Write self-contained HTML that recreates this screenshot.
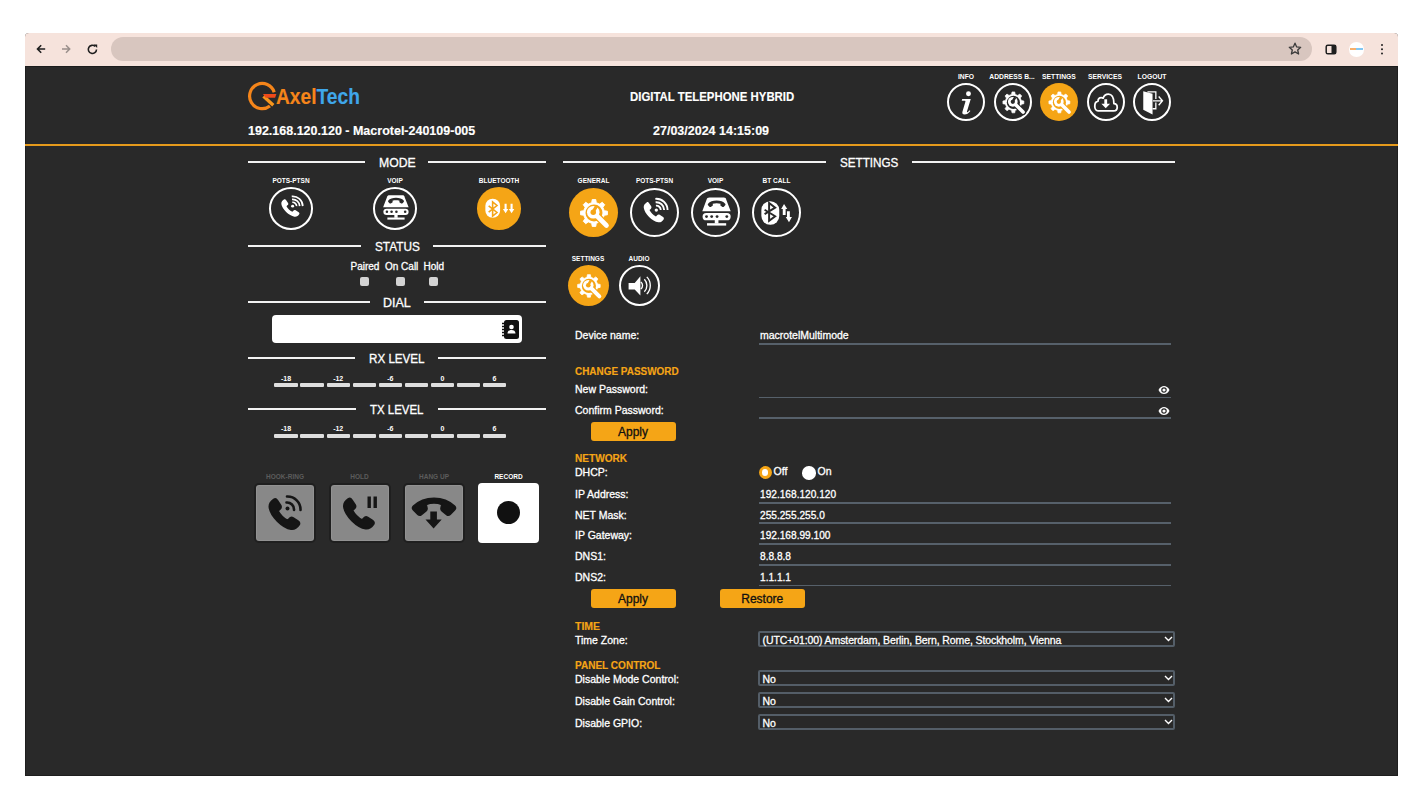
<!DOCTYPE html>
<html><head><meta charset="utf-8">
<style>
*{box-sizing:border-box;margin:0;padding:0}
html,body{width:1422px;height:800px;background:#fff;overflow:hidden;font-family:"Liberation Sans",sans-serif}
.a{position:absolute}
#win{position:absolute;left:25px;top:33px;width:1373px;height:743px;border-radius:4px 4px 0 0;overflow:hidden;background:#292929}
#tb{position:absolute;left:0;top:0;width:1373px;height:33px;background:#f6e3dc}
#omni{position:absolute;left:86px;top:4px;width:1201px;height:24px;border-radius:12px;background:#d8c6bf}
#page{position:absolute;left:0;top:33px;width:1373px;height:710px;background:#292929;border-left:1px solid #1e1e1e;border-right:1px solid #1e1e1e;border-bottom:1px solid #1e1e1e;border-top:1px solid #1b1c1c}
.t{position:absolute;white-space:nowrap;color:#fff;line-height:1;-webkit-text-stroke:0.3px currentColor}
.t.b{-webkit-text-stroke:0.15px currentColor}
.b{font-weight:bold}
.hr{position:absolute;height:2px;background:#f2f2f2}
.circ{position:absolute;border-radius:50%;border:2px solid #fff}
.circ.on{background:#f5a516;border:none}
.circ svg{position:absolute;left:-2px;top:-2px;width:calc(100% + 4px);height:calc(100% + 4px)}
.circ.on svg{left:0;top:0;width:100%;height:100%}
.lbl{position:absolute;white-space:nowrap;color:#fff;font-weight:bold;line-height:1;text-align:center;letter-spacing:-0.3px}
.orange{color:#f5a516}
.ul{position:absolute;height:1.6px;background:#56606a}
.sel{position:absolute;height:16px;border:2px solid #545e68;border-radius:2px}
.btn{position:absolute;background:#f5a516;border-radius:3px;color:#111;font-size:12px;text-align:center;line-height:20px;height:19px;-webkit-text-stroke:0.3px #111}
.bar{position:absolute;height:4px;background:#dedede;border-radius:1px}
.sq{position:absolute;width:9px;height:9px;background:#d3d3d3;border-radius:2px}
.pbtn{position:absolute;width:62px;height:60px;background:#888;border:2px solid #1f1f1f;border-radius:5px;box-shadow:inset 0 0 0 1px #929292}
</style></head><body>

<svg width="0" height="0" style="position:absolute">
<defs>
  <symbol id="hs" viewBox="0 0 24 24"><path d="M5.5 2.5C4 3.5 2.5 5 2.8 7.5 3.5 13 11 20.5 16.5 21.2c2.5.3 4-1.2 5-2.7.5-.8.3-1.7-.5-2.2l-3.2-2.1c-.8-.5-1.8-.3-2.4.4l-1.1 1.2c-2.8-1.5-4.6-3.3-6.1-6.1l1.2-1.1c.7-.6.9-1.6.4-2.4L7.7 3c-.5-.8-1.4-1-2.2-.5z"/></symbol>
  <symbol id="hang" viewBox="0 0 24 24"><path d="M12 7.5C7.5 7.5 3.8 9.2 1.3 11.6c-.5.5-.5 1.4 0 1.9l2.3 2.3c.5.5 1.3.5 1.8.1l2.4-1.9c.4-.3.6-.9.5-1.4l-.4-2c2.6-.9 5.6-.9 8.2 0l-.4 2c-.1.5.1 1.1.5 1.4l2.4 1.9c.5.4 1.3.4 1.8-.1l2.3-2.3c.5-.5.5-1.4 0-1.9C20.2 9.2 16.5 7.5 12 7.5z"/></symbol>
  <symbol id="gear" viewBox="0 0 100 100">
    <path fill="#fff" stroke="#fff" stroke-width="1.8" stroke-linejoin="round" d="M46.20 30.00 L47.40 23.50 L54.60 23.50 L55.80 30.00 L62.46 32.76 L67.90 29.01 L72.99 34.10 L69.24 39.54 L72.00 46.20 L78.50 47.40 L78.50 54.60 L72.00 55.80 L69.24 62.46 L72.99 67.90 L67.90 72.99 L62.46 69.24 L55.80 72.00 L54.60 78.50 L47.40 78.50 L46.20 72.00 L39.54 69.24 L34.10 72.99 L29.01 67.90 L32.76 62.46 L30.00 55.80 L23.50 54.60 L23.50 47.40 L30.00 46.20 L32.76 39.54 L29.01 34.10 L34.10 29.01 L39.54 32.76Z"/>
    <circle cx="51" cy="51" r="17.3" fill="var(--bg)"/>
    <g stroke-linecap="round">
      <path d="M60 60L77 77" stroke="var(--bg)" stroke-width="15"/>
      <path d="M50 50L76.5 76.5" stroke="#fff" stroke-width="9.5"/>
      <circle cx="49.5" cy="49.5" r="12.8" fill="#fff"/>
      <circle cx="49.5" cy="49.5" r="5.6" fill="var(--bg)"/>
      <path d="M49 49L56 37.5" stroke="var(--bg)" stroke-width="6.5" stroke-linecap="butt"/>
    </g>
  </symbol>
  <symbol id="info" viewBox="0 0 100 100">
    <circle cx="56.5" cy="28.5" r="6.5" fill="#fff"/>
    <path fill="#fff" d="M40 42h22.5l-10 33c-.6 2 .8 2.6 2.4 1.2l5-4.4 1.6 1.6c-5 6-9.5 9.5-15.5 9.5-4.6 0-6.6-3-5.4-7.4l7.8-26c.5-1.8-.3-2.5-2-2.5h-7.6z"/>
  </symbol>
  <symbol id="cloud" viewBox="0 0 100 100">
    <path fill="none" stroke="#fff" stroke-width="4.7" stroke-linejoin="round" d="M29 73.3H70C75.5 73.3 79.5 69 79.5 63.5 79.5 58 75.5 54 70.8 54 70.8 36 64 29 56.5 29 49 29 44 34 42.5 40 41 39 39.5 38.5 37.5 38.5 32.5 38.5 29 42.5 29 48 24 49 20.5 54 20.5 61 20.5 67.5 24 73.3 29 73.3Z"/>
    <path fill="#fff" d="M45.6 42.8h7.4v11.5h7.8l-11.5 12.2-11.5-12.2h7.8z"/>
  </symbol>
  <symbol id="logout" viewBox="0 0 100 100">
    <path fill="#fff" d="M27 21.9l24.4 6.7v54.1l-24.4-12.2z"/>
    <path fill="none" stroke="#fff" stroke-width="3.4" d="M38 23.2h22.1v19M60.1 51v16.8h-8.7"/>
    <path fill="none" stroke="#fff" stroke-width="3.6" d="M52.7 46.9h23M67.6 35.4l10 11.5-10 11.5"/>
  </symbol>
  <symbol id="phonewave" viewBox="0 0 100 100">
    <use href="#hs" x="22" y="24" width="52" height="52" fill="#fff"/>
    <circle cx="53.7" cy="45" r="3.4" fill="#fff"/>
    <path fill="none" stroke="#fff" stroke-width="3.8" d="M52.9 36A9 9 0 0 1 62.7 45M52.3 29.1A16 16 0 0 1 69.7 45M51.7 22.1A23 23 0 0 1 76.7 45"/>
  </symbol>
  <symbol id="voip" viewBox="0 0 100 100">
    <path fill="#fff" d="M37.5 19.4h29.5c3 0 4.6 1.5 5 4.5l9 23.8h-58l8.7-23.8c.8-3 2.5-4.5 5.8-4.5z"/>
    <path fill="#292929" d="M52.3 25.5c-7.5 0-14 2.5-17.5 6.5-.9 1-.9 2 0 3l2.8 3.2c.8.9 1.8 1 2.8.4l3.5-2.2c.6-.4.9-1 .8-1.7l-.4-2.6c5-1.5 11-1.5 16 0l-.4 2.6c-.1.7.2 1.3.8 1.7l3.5 2.2c1 .6 2 .5 2.8-.4l2.8-3.2c.9-1 .9-2 0-3-3.5-4-10-6.5-17.5-6.5z"/>
    <rect x="23.6" y="51" width="57.3" height="15" rx="7.5" fill="#fff"/>
    <circle cx="31.6" cy="58.3" r="2.9" fill="#292929"/><circle cx="42.2" cy="58.3" r="2.9" fill="#292929"/><circle cx="53.2" cy="58.3" r="2.9" fill="#292929"/><circle cx="73.1" cy="58.3" r="2.9" fill="#292929"/>
    <rect x="48.5" y="65" width="7.5" height="7.5" fill="#fff"/>
    <rect x="32.7" y="71.8" width="39.1" height="4.9" fill="#fff"/>
  </symbol>
  <symbol id="bt" viewBox="0 0 100 100">
    <rect x="19.1" y="26.9" width="36.5" height="48.2" rx="18" fill="#fff"/>
    <path fill="none" stroke="var(--bg)" stroke-width="4" stroke-linejoin="miter" d="M25.7 44.4l21.6 13.2-12.4 9.5v-36.5l12.4 9.5-21.6 13.2"/>
  </symbol>
  <symbol id="bt2" viewBox="0 0 100 100">
    <rect x="19" y="27.4" width="33.5" height="45.2" rx="16.5" fill="#fff"/>
    <path fill="none" stroke="var(--bg)" stroke-width="3.6" stroke-linejoin="miter" d="M26.5 44.5L45.5 60 35.5 68.5V35L45.5 43.5 26.5 59"/>
  </symbol>
  <symbol id="arrud" viewBox="0 0 100 100">
    <path fill="#fff" d="M65.4 32.7l6.6 10h-3.4v12.5h-5.8v-12.5h-3.3z"/>
    <path fill="#fff" d="M75.5 70.1l6-10.8h-4.3v-11.6h-5.8v11.6h-2.5z"/>
  </symbol>
  <symbol id="arrdd" viewBox="0 0 100 100">
    <path fill="#fff" d="M65 61.5l-6.2-9.5h3.8v-12.7h4.8v12.7h3.8z"/>
    <path fill="#fff" d="M78.6 61.5l-6.2-9.5h3.8v-12.7h4.8v12.7h3.8z"/>
  </symbol>
  <symbol id="speaker" viewBox="0 0 100 100">
    <path fill="#fff" d="M23.4 44h14.9l13.9-16.4v46.8l-13.9-14.9h-14.9z"/>
    <path fill="none" stroke="#fff" stroke-width="3.3" d="M53.3 41.3A11.3 11.3 0 0 1 53.3 58.7M61.8 34.7A22 22 0 0 1 61.8 65.3M67.8 28.95A30.3 30.3 0 0 1 67.8 71.05"/>
  </symbol>
</defs>
</svg>
<div id="win">
  <div id="tb">
    <div id="omni"></div>
  </div>
  <div id="page"></div>
</div>

<!-- browser chrome icons -->
<svg class="a" style="left:33px;top:41px" width="16" height="16" viewBox="0 0 16 16"><path d="M12.2 8H5M8.2 4.3L4.5 8l3.7 3.7" fill="none" stroke="#1f1f1f" stroke-width="1.6"/></svg>
<svg class="a" style="left:58px;top:41px" width="16" height="16" viewBox="0 0 16 16"><path d="M4 8h7.5M8 4.3L11.7 8 8 11.7" fill="none" stroke="#9a8f8b" stroke-width="1.5"/></svg>
<svg class="a" style="left:84px;top:41px" width="16" height="16" viewBox="0 0 16 16"><path d="M12.5 8.5A4.1 4.1 0 1 1 11.2 5.4" fill="none" stroke="#1f1f1f" stroke-width="1.6"/><path d="M9.6 3.4h3.6V7z" fill="#1f1f1f"/></svg>
<svg class="a" style="left:1287px;top:41px" width="16" height="16" viewBox="0 0 16 16"><path d="M8 2.2l1.7 3.7 4 .4-3 2.7.9 4-3.6-2.1-3.6 2.1.9-4-3-2.7 4-.4z" fill="none" stroke="#3a3a3a" stroke-width="1.3" stroke-linejoin="round"/></svg>
<svg class="a" style="left:1325px;top:43.5px" width="12" height="11" viewBox="0 0 12 11"><rect x="1.2" y="1.2" width="9.6" height="8.6" rx="1.6" fill="none" stroke="#1f1f1f" stroke-width="1.5"/><rect x="6.5" y="1.2" width="4.3" height="8.6" fill="#1f1f1f"/></svg>
<div class="a" style="left:1349px;top:42px;width:15px;height:14.5px;border-radius:50%;background:#fff"></div>
<div class="a" style="left:1350px;top:48px;width:13px;height:2px;background:linear-gradient(90deg,#f5a050 45%,#6cbdf0 45%);opacity:.85"></div>
<div class="a" style="left:1381px;top:43.5px;width:2.3px;height:2.3px;border-radius:50%;background:#1f1f1f;box-shadow:0 4.3px 0 #1f1f1f,0 8.6px 0 #1f1f1f"></div>

<!-- header -->
<div class="hr" style="left:25px;top:144px;width:1373px;background:#e59a1c"></div>

<!-- logo -->
<svg class="a" style="left:246px;top:80px" width="32" height="32" viewBox="0 0 32 32">
  <path d="M28.2 12.2A12.6 12.6 0 1 0 23.96 26" fill="none" stroke="#f5851a" stroke-width="3.2"/>
  <path d="M17.5 16.2L27.3 25.2" stroke="#f7961c" stroke-width="3.4"/>
  <path d="M17 14h13.4l-1.3 3.8h-9.5z" fill="#ee4a1a"/>
</svg>
<div id="logo" class="t b" style="left:276px;top:87px;font-size:21.5px;color:#f5851a;transform:scaleX(0.893);transform-origin:0 0">Axel<span style="color:#3fa7ea">Tech</span></div>
<div id="ipt" class="t b" style="left:248px;top:124.5px;font-size:12.5px">192.168.120.120 - Macrotel-240109-005</div>
<div id="dth" class="t b" style="left:630px;top:91px;font-size:12.5px;transform:scaleX(0.912);transform-origin:0 0">DIGITAL TELEPHONE HYBRID</div>
<div id="dt" class="t b" style="left:653px;top:124.5px;font-size:12.5px">27/03/2024 14:15:09</div>

<!-- header icons -->
<div class="lbl" style="left:946px;top:72.8px;width:40px;font-size:7.5px;letter-spacing:0;transform:scaleX(0.9)">INFO</div>
<div class="lbl" style="left:986px;top:72.8px;width:52px;font-size:7.5px;letter-spacing:0;transform:scaleX(0.9)">ADDRESS B...</div>
<div class="lbl" style="left:1034px;top:72.8px;width:50px;font-size:7.5px;letter-spacing:0;transform:scaleX(0.9)">SETTINGS</div>
<div class="lbl" style="left:1080px;top:72.8px;width:50px;font-size:7.5px;letter-spacing:0;transform:scaleX(0.9)">SERVICES</div>
<div class="lbl" style="left:1127px;top:72.8px;width:50px;font-size:7.5px;letter-spacing:0;transform:scaleX(0.9)">LOGOUT</div>
<div class="circ" style="left:947px;top:83.3px;width:38px;height:38px;--bg:#292929"><svg><use href="#info"/></svg></div>
<div class="circ" style="left:993.7px;top:83.3px;width:38px;height:38px;--bg:#292929"><svg><use href="#gear"/></svg></div>
<div class="circ on" style="left:1040.2px;top:83.3px;width:38px;height:38px;--bg:#f5a516"><svg><use href="#gear"/></svg></div>
<div class="circ" style="left:1086.7px;top:83.3px;width:38px;height:38px;--bg:#292929"><svg><use href="#cloud"/></svg></div>
<div class="circ" style="left:1133.2px;top:83.3px;width:38px;height:38px;--bg:#292929"><svg><use href="#logout"/></svg></div>

<!-- LEFT PANEL -->
<div class="hr" style="left:248px;top:161px;width:117px"></div>
<div class="hr" style="left:428px;top:161px;width:118px"></div>
<div id="tMODE" class="t" style="left:379px;top:157px;font-size:12.5px;transform:scaleX(0.977);transform-origin:0 0">MODE</div>
<div class="lbl" style="left:266px;top:178px;width:50px;font-size:6.5px;letter-spacing:0">POTS-PTSN</div>
<div class="lbl" style="left:370px;top:178px;width:50px;font-size:6.5px;letter-spacing:0">VOIP</div>
<div class="lbl" style="left:474px;top:178px;width:50px;font-size:6.5px;letter-spacing:0">BLUETOOTH</div>
<div class="circ" style="left:269px;top:187px;width:44px;height:42.5px;--bg:#292929"><svg viewBox="0 0 100 100" preserveAspectRatio="none"><use href="#phonewave"/></svg></div>
<div class="circ" style="left:373px;top:187px;width:44px;height:42.5px;--bg:#292929"><svg viewBox="0 0 100 100" preserveAspectRatio="none"><use href="#voip"/></svg></div>
<div class="circ on" style="left:477px;top:187px;width:44px;height:42.5px;--bg:#f5a516"><svg viewBox="0 0 100 100" preserveAspectRatio="none"><use href="#bt2"/><use href="#arrdd"/></svg></div>

<div class="hr" style="left:248px;top:245px;width:113px"></div>
<div class="hr" style="left:433px;top:245px;width:113px"></div>
<div id="tSTATUS" class="t" style="left:374.5px;top:240.5px;font-size:12.5px;transform:scaleX(0.944);transform-origin:0 0">STATUS</div>
<div id="tPaired" class="t" style="left:350.5px;top:262px;font-size:10px">Paired</div>
<div id="tOnCall" class="t" style="left:385px;top:262px;font-size:10px">On Call</div>
<div id="tHold" class="t" style="left:423.5px;top:262px;font-size:10px">Hold</div>
<div class="sq" style="left:359.5px;top:277px"></div>
<div class="sq" style="left:396px;top:277px"></div>
<div class="sq" style="left:428.5px;top:277px"></div>

<div class="hr" style="left:248px;top:300.5px;width:122px"></div>
<div class="hr" style="left:424px;top:300.5px;width:122px"></div>
<div id="tDIAL" class="t" style="left:383px;top:296.5px;font-size:12.5px">DIAL</div>
<div class="a" style="left:271.5px;top:315px;width:250.5px;height:28px;background:#fff;border-radius:4px"></div>
<svg class="a" style="left:500px;top:319px" width="21" height="21" viewBox="0 0 21 21">
  <rect x="4" y="1" width="15" height="19" rx="2.5" fill="#111"/>
  <path d="M2 4.5h4M2 7.5h4M2 10.5h4M2 13.5h4M2 16.5h4" stroke="#111" stroke-width="1.4"/>
  <circle cx="11.5" cy="8" r="2.3" fill="#fff"/>
  <path d="M7.5 14.5c0-2.5 1.8-3.6 4-3.6s4 1.1 4 3.6z" fill="#fff"/>
</svg>

<div class="hr" style="left:248px;top:357px;width:107px"></div>
<div class="hr" style="left:438px;top:357px;width:108px"></div>
<div id="tRX" class="t" style="left:369px;top:353px;font-size:12.5px;transform:scaleX(0.93);transform-origin:0 0">RX LEVEL</div>
<div class="hr" style="left:248px;top:408px;width:108px"></div>
<div class="hr" style="left:437.5px;top:408px;width:108.5px"></div>
<div id="tTX" class="t" style="left:370px;top:404px;font-size:12.5px;transform:scaleX(0.916);transform-origin:0 0">TX LEVEL</div>
<div class="bar" style="left:274.4px;top:383px;width:23.5px"></div><div class="bar" style="left:300.4px;top:383px;width:23.5px"></div><div class="bar" style="left:326.5px;top:383px;width:23.5px"></div><div class="bar" style="left:352.5px;top:383px;width:23.5px"></div><div class="bar" style="left:378.6px;top:383px;width:23.5px"></div><div class="bar" style="left:404.6px;top:383px;width:23.5px"></div><div class="bar" style="left:430.7px;top:383px;width:23.5px"></div><div class="bar" style="left:456.8px;top:383px;width:23.5px"></div><div class="bar" style="left:482.8px;top:383px;width:23.5px"></div><div class="lbl" style="left:271.1px;top:374.5px;width:30px;font-size:7px;letter-spacing:0">-18</div><div class="lbl" style="left:323.2px;top:374.5px;width:30px;font-size:7px;letter-spacing:0">-12</div><div class="lbl" style="left:375.3px;top:374.5px;width:30px;font-size:7px;letter-spacing:0">-6</div><div class="lbl" style="left:427.4px;top:374.5px;width:30px;font-size:7px;letter-spacing:0">0</div><div class="lbl" style="left:479.5px;top:374.5px;width:30px;font-size:7px;letter-spacing:0">6</div>
<div class="bar" style="left:274.4px;top:434px;width:23.5px"></div><div class="bar" style="left:300.4px;top:434px;width:23.5px"></div><div class="bar" style="left:326.5px;top:434px;width:23.5px"></div><div class="bar" style="left:352.5px;top:434px;width:23.5px"></div><div class="bar" style="left:378.6px;top:434px;width:23.5px"></div><div class="bar" style="left:404.6px;top:434px;width:23.5px"></div><div class="bar" style="left:430.7px;top:434px;width:23.5px"></div><div class="bar" style="left:456.8px;top:434px;width:23.5px"></div><div class="bar" style="left:482.8px;top:434px;width:23.5px"></div><div class="lbl" style="left:271.1px;top:424.8px;width:30px;font-size:7px;letter-spacing:0">-18</div><div class="lbl" style="left:323.2px;top:424.8px;width:30px;font-size:7px;letter-spacing:0">-12</div><div class="lbl" style="left:375.3px;top:424.8px;width:30px;font-size:7px;letter-spacing:0">-6</div><div class="lbl" style="left:427.4px;top:424.8px;width:30px;font-size:7px;letter-spacing:0">0</div><div class="lbl" style="left:479.5px;top:424.8px;width:30px;font-size:7px;letter-spacing:0">6</div>

<!-- bottom buttons -->
<div class="lbl" style="left:255px;top:473.5px;width:60px;font-size:6.5px;color:#5c5c5c;letter-spacing:0">HOOK-RING</div>
<div class="lbl" style="left:329.5px;top:473.5px;width:60px;font-size:6.5px;color:#5c5c5c;letter-spacing:0">HOLD</div>
<div class="lbl" style="left:404px;top:473.5px;width:60px;font-size:6.5px;color:#5c5c5c;letter-spacing:0">HANG UP</div>
<div class="lbl" style="left:478.5px;top:473.5px;width:60px;font-size:6.5px;letter-spacing:0">RECORD</div>
<div class="pbtn" style="left:254.3px;top:482.6px"></div>
<div class="pbtn" style="left:328.7px;top:482.6px"></div>
<div class="pbtn" style="left:403.2px;top:482.6px"></div>
<div class="a" style="left:478px;top:483px;width:61px;height:59.5px;background:#fff;border-radius:4px"></div>
<div class="a" style="left:496.5px;top:500.5px;width:23px;height:23px;border-radius:50%;background:#111"></div>

<svg class="a" style="left:256px;top:484.5px" width="58" height="56" viewBox="0 0 58 56">
  <use href="#hs" x="9" y="10.5" width="38" height="38" fill="#151515" stroke="#151515" stroke-width="1.1" stroke-linejoin="round"/>
  <circle cx="31.5" cy="23.5" r="2" fill="#151515"/>
  <path fill="none" stroke="#151515" stroke-width="2.6" stroke-linecap="round" d="M30.5 17.5a7 7 0 0 1 7.5 7.5M31 11.5a13 13 0 0 1 13.5 13.5"/>
</svg>
<svg class="a" style="left:330.5px;top:484.5px" width="58" height="56" viewBox="0 0 58 56">
  <use href="#hs" x="8.5" y="10" width="38" height="38" fill="#151515" stroke="#151515" stroke-width="1.1" stroke-linejoin="round"/>
  <rect x="36.5" y="11.5" width="3.4" height="11.5" fill="#151515"/>
  <rect x="42.5" y="11.5" width="3.4" height="11.5" fill="#151515"/>
</svg>
<svg class="a" style="left:405px;top:484.5px" width="58" height="56" viewBox="0 0 58 56">
  <use href="#hang" x="6" y="-1" width="46" height="46" fill="#151515" stroke="#151515" stroke-width="0.9" stroke-linejoin="round"/>
  <path fill="#151515" d="M25.3 26.5h6.6v8h4.8l-8.1 9-8.1-9h4.8z"/>
</svg>


<!-- SETTINGS PANEL -->
<div class="hr" style="left:563px;top:161px;width:263px"></div>
<div class="hr" style="left:911.5px;top:161px;width:263.5px"></div>
<div id="tSET" class="t" style="left:839.5px;top:157px;font-size:12.5px;transform:scaleX(0.934);transform-origin:0 0">SETTINGS</div>
<div class="lbl" style="left:568.5px;top:178px;width:50px;font-size:6.5px;letter-spacing:0">GENERAL</div>
<div class="lbl" style="left:629.5px;top:178px;width:50px;font-size:6.5px;letter-spacing:0">POTS-PTSN</div>
<div class="lbl" style="left:690.5px;top:178px;width:50px;font-size:6.5px;letter-spacing:0">VOIP</div>
<div class="lbl" style="left:751.5px;top:178px;width:50px;font-size:6.5px;letter-spacing:0">BT CALL</div>
<div class="circ on" style="left:569px;top:187.5px;width:49px;height:49px;--bg:#f5a516"><svg viewBox="0 0 100 100"><use href="#gear"/></svg></div>
<div class="circ" style="left:630px;top:187.5px;width:49px;height:49px;--bg:#292929"><svg viewBox="0 0 100 100"><use href="#phonewave"/></svg></div>
<div class="circ" style="left:691px;top:187.5px;width:49px;height:49px;--bg:#292929"><svg viewBox="0 0 100 100"><use href="#voip"/></svg></div>
<div class="circ" style="left:752px;top:187.5px;width:49px;height:49px;--bg:#292929"><svg viewBox="0 0 100 100"><use href="#bt"/><use href="#arrud"/></svg></div>

<div class="lbl" style="left:563px;top:255.5px;width:50px;font-size:6.5px;letter-spacing:0">SETTINGS</div>
<div class="lbl" style="left:614px;top:255.5px;width:50px;font-size:6.5px;letter-spacing:0">AUDIO</div>
<div class="circ on" style="left:568px;top:265px;width:41px;height:41px;--bg:#f5a516"><svg viewBox="0 0 100 100"><use href="#gear"/></svg></div>
<div class="circ" style="left:618.5px;top:265px;width:41px;height:41px;--bg:#292929"><svg viewBox="0 0 100 100"><use href="#speaker"/></svg></div>

<!-- form -->
<div id="fDev" class="t" style="left:575px;top:330px;font-size:10.5px">Device name:</div>
<div id="fDevV" class="t" style="left:760px;top:330px;font-size:10.5px">macrotelMultimode</div>
<div class="ul" style="left:759px;top:343px;width:412px"></div>
<div id="fCP" class="t b orange" style="left:575px;top:366px;font-size:10.5px;transform:scaleX(0.947);transform-origin:0 0">CHANGE PASSWORD</div>
<div id="fNP" class="t" style="left:575px;top:384px;font-size:10.5px">New Password:</div>
<div class="ul" style="left:759px;top:396.5px;width:412px"></div>
<div id="fCfP" class="t" style="left:575px;top:404.5px;font-size:10.5px">Confirm Password:</div>
<div class="ul" style="left:759px;top:417px;width:412px"></div>
<svg class="a" style="left:1158px;top:385px" width="12" height="10" viewBox="0 0 12 10"><path d="M0.5 5C2 2 4 1 6 1s4 1 5.5 4C10 8 8 9 6 9S2 8 .5 5z" fill="#fff"/><circle cx="6" cy="5" r="2.2" fill="none" stroke="#292929" stroke-width="1.2"/></svg>
<svg class="a" style="left:1158px;top:405.5px" width="12" height="10" viewBox="0 0 12 10"><path d="M0.5 5C2 2 4 1 6 1s4 1 5.5 4C10 8 8 9 6 9S2 8 .5 5z" fill="#fff"/><circle cx="6" cy="5" r="2.2" fill="none" stroke="#292929" stroke-width="1.2"/></svg>
<div class="btn" style="left:590.5px;top:421.5px;width:85px">Apply</div>

<div id="fNET" class="t b orange" style="left:575px;top:453px;font-size:10.5px;transform:scaleX(0.96);transform-origin:0 0">NETWORK</div>
<div id="fDHCP" class="t" style="left:575px;top:467px;font-size:10.5px">DHCP:</div>
<div class="a" style="left:758.5px;top:466px;width:13px;height:13px;border-radius:50%;background:#f5a516"></div>
<div class="a" style="left:761.75px;top:469.25px;width:6.5px;height:6.5px;border-radius:50%;background:#fff"></div>
<div id="fOff" class="t" style="left:773.5px;top:466.2px;font-size:10.5px">Off</div>
<div class="a" style="left:802px;top:466px;width:13.5px;height:13.5px;border-radius:50%;background:#fff"></div>
<div id="fOn" class="t" style="left:817.5px;top:466.2px;font-size:10.5px">On</div>
<div class="t" style="left:575px;top:488.8px;font-size:10.5px">IP Address:</div><div class="t" style="left:760px;top:488.8px;font-size:10.5px;transform:scaleX(0.965);transform-origin:0 0">192.168.120.120</div><div class="ul" style="left:759px;top:502px;width:412px"></div>
<div class="t" style="left:575px;top:509.6px;font-size:10.5px">NET Mask:</div><div class="t" style="left:760px;top:509.6px;font-size:10.5px;transform:scaleX(0.965);transform-origin:0 0">255.255.255.0</div><div class="ul" style="left:759px;top:522.3px;width:412px"></div>
<div class="t" style="left:575px;top:530.3px;font-size:10.5px">IP Gateway:</div><div class="t" style="left:760px;top:530.3px;font-size:10.5px;transform:scaleX(0.965);transform-origin:0 0">192.168.99.100</div><div class="ul" style="left:759px;top:543.2px;width:412px"></div>
<div class="t" style="left:575px;top:551.1px;font-size:10.5px">DNS1:</div><div class="t" style="left:760px;top:551.1px;font-size:10.5px;transform:scaleX(0.965);transform-origin:0 0">8.8.8.8</div><div class="ul" style="left:759px;top:564.3px;width:412px"></div>
<div class="t" style="left:575px;top:571.8px;font-size:10.5px">DNS2:</div><div class="t" style="left:760px;top:571.8px;font-size:10.5px;transform:scaleX(0.965);transform-origin:0 0">1.1.1.1</div><div class="ul" style="left:759px;top:584.5px;width:412px"></div>

<div class="btn" style="left:590.5px;top:588.8px;width:85px">Apply</div>
<div class="btn" style="left:720px;top:588.8px;width:84.5px">Restore</div>

<div id="fTIME" class="t b orange" style="left:575px;top:621px;font-size:10.5px">TIME</div>
<div id="fTZ" class="t" style="left:575px;top:635px;font-size:10.5px">Time Zone:</div>
<div class="sel" style="left:758px;top:631px;width:417px;height:16px"></div>
<div id="fTZV" class="t" style="left:762.5px;top:634.5px;font-size:10.5px;letter-spacing:-0.1px">(UTC+01:00) Amsterdam, Berlin, Bern, Rome, Stockholm, Vienna</div>
<div id="fPC" class="t b orange" style="left:575px;top:659.5px;font-size:10.5px;transform:scaleX(0.955);transform-origin:0 0">PANEL CONTROL</div>
<div class="t" style="left:575px;top:674px;font-size:10.5px">Disable Mode Control:</div><div class="sel" style="left:758px;top:670px;width:417px;height:16px"></div><div class="t" style="left:762.5px;top:674px;font-size:10.5px">No</div>
<div class="t" style="left:575px;top:696px;font-size:10.5px">Disable Gain Control:</div><div class="sel" style="left:758px;top:692px;width:417px;height:16px"></div><div class="t" style="left:762.5px;top:696px;font-size:10.5px">No</div>
<div class="t" style="left:575px;top:718px;font-size:10.5px">Disable GPIO:</div><div class="sel" style="left:758px;top:714px;width:417px;height:16px"></div><div class="t" style="left:762.5px;top:718px;font-size:10.5px">No</div>
<svg class="a" style="left:1164px;top:636px" width="9" height="6" viewBox="0 0 9 6"><path d="M1 1l3.5 3.5L8 1" fill="none" stroke="#fff" stroke-width="1.4"/></svg><svg class="a" style="left:1164px;top:675px" width="9" height="6" viewBox="0 0 9 6"><path d="M1 1l3.5 3.5L8 1" fill="none" stroke="#fff" stroke-width="1.4"/></svg><svg class="a" style="left:1164px;top:697px" width="9" height="6" viewBox="0 0 9 6"><path d="M1 1l3.5 3.5L8 1" fill="none" stroke="#fff" stroke-width="1.4"/></svg><svg class="a" style="left:1164px;top:719px" width="9" height="6" viewBox="0 0 9 6"><path d="M1 1l3.5 3.5L8 1" fill="none" stroke="#fff" stroke-width="1.4"/></svg>
</body></html>
